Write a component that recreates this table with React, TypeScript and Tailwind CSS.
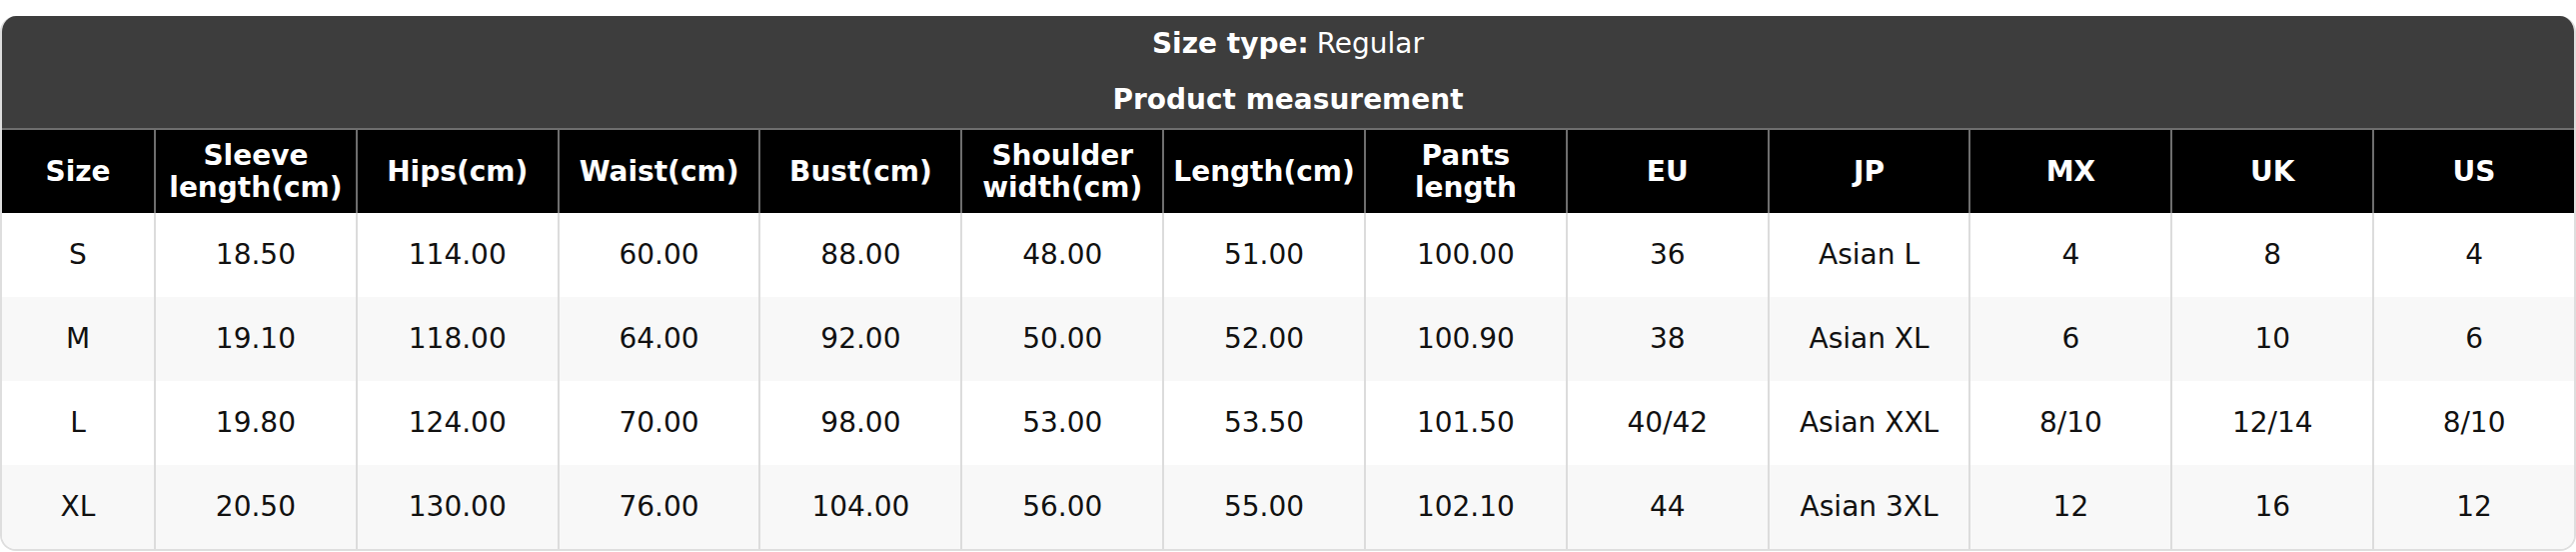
const headers = [
  "Size",
  "Sleeve length(cm)",
  "Hips(cm)",
  "Waist(cm)",
  "Bust(cm)",
  "Shoulder width(cm)",
  "Length(cm)",
  "Pants length",
  "EU",
  "JP",
  "MX",
  "UK",
  "US",
];

const rows = [
  ["S", "18.50", "114.00", "60.00", "88.00", "48.00", "51.00", "100.00", "36", "Asian L", "4", "8", "4"],
  ["M", "19.10", "118.00", "64.00", "92.00", "50.00", "52.00", "100.90", "38", "Asian XL", "6", "10", "6"],
  ["L", "19.80", "124.00", "70.00", "98.00", "53.00", "53.50", "101.50", "40/42", "Asian XXL", "8/10", "12/14", "8/10"],
  ["XL", "20.50", "130.00", "76.00", "104.00", "56.00", "55.00", "102.10", "44", "Asian 3XL", "12", "16", "12"],
];

export default function App() {
  return (
    <div className="w-[2578px] h-[552px] bg-white pt-[16px] font-['DejaVu_Sans',sans-serif]">
      <div className="rounded-[16px] overflow-hidden border-x-2 border-b-2 border-[#dedede] bg-white">
        {/* Title block */}
        <div className="bg-[#3d3d3d] text-white text-[28px] text-center border-b-2 border-[#6e6e6e]">
          <div className="h-[56px] flex items-center justify-center">
            <span className="font-bold">Size type:</span>
            <span className="ml-[8px]">Regular</span>
          </div>
          <div className="h-[56px] flex items-center justify-center font-bold">Product measurement</div>
        </div>

        {/* Column headers */}
        <div className="grid grid-cols-[152px_repeat(12,minmax(0,1fr))] bg-black text-white font-bold text-[28px] leading-[32px] h-[83px]">
          {headers.map((h, i) => (
            <div
              key={h}
              className={`flex items-center justify-center text-center px-[6px] ${i > 0 ? "border-l-2 border-[#6e6e6e]" : ""}`}
            >
              {h}
            </div>
          ))}
        </div>

        {/* Body */}
        {rows.map((r, ri) => (
          <div
            key={r[0]}
            className={`grid grid-cols-[152px_repeat(12,minmax(0,1fr))] h-[84px] text-[28px] text-[#111] ${ri % 2 === 1 ? "bg-[#f8f8f8]" : "bg-white"}`}
          >
            {r.map((c, ci) => (
              <div
                key={ci}
                className={`flex items-center justify-center ${ci > 0 ? "border-l-2 border-[#dcdcdc]" : ""}`}
              >
                {c}
              </div>
            ))}
          </div>
        ))}
      </div>
    </div>
  );
}
